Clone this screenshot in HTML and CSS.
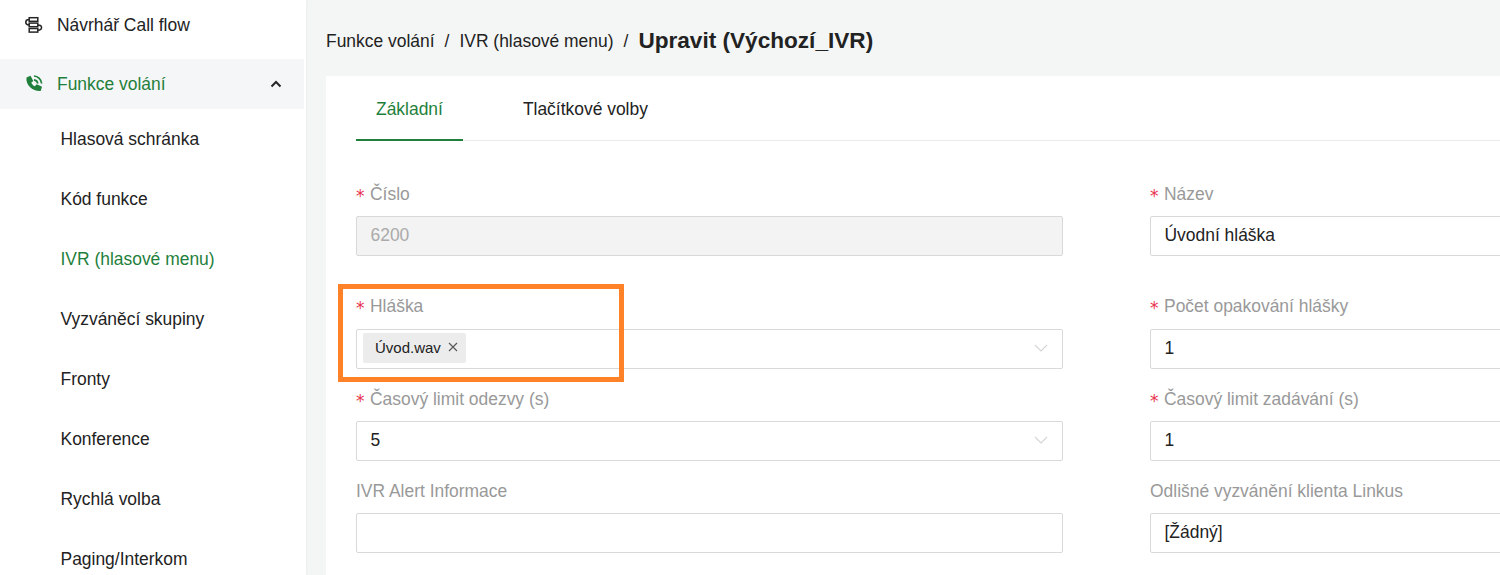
FILE: index.html
```html
<!DOCTYPE html>
<html lang="en">
<head>
  <meta charset="UTF-8">
  <title>Upravit IVR</title>
  <link rel="stylesheet" href="styles.css">
</head>
<body>
  <div class="page">
    <aside class="sidebar">
      <div class="nav-top">
        <svg class="nav-icon" viewBox="0 0 20 20" fill="none" stroke="#262626" stroke-width="1.5">
          <rect x="5.2" y="2.7" width="8.6" height="3.600"/>
          <rect x="5.2" y="8.100" width="8.6" height="3.600"/>
          <rect x="5.2" y="13.500" width="8.6" height="3.600"/>
          <path d="M5.2 4.500C.6 4.500 .6 9.900 5.200 9.900M13.800 9.900c5 0 5 5.400 0 5.400"/>
        </svg>
        <span>Návrhář Call flow</span>
      </div>
      <div class="nav-open">
        <svg class="nav-icon" viewBox="0 0 20 20" fill="#1f7f3b">
          <path d="M2.500 3.500 6.500 1.800 9.300 7 7.200 8.800c.8 1.600 1.900 2.800 3.600 3.500l2-2.100 5.200 2.600-1.300 4.300C8.500 17.500 1.500 11 2.500 3.500Z"/>
          <path d="M10 2c3.600.2 7.200 3.200 7.600 7.500M10 5.800c2 .2 3.500 1.700 3.800 3.700" fill="none" stroke="#1f7f3b" stroke-width="1.700"/>
        </svg>
        <span>Funkce volání</span>
        <svg class="nav-caret" viewBox="0 0 12 8" fill="none" stroke="#262626" stroke-width="2">
          <path d="M1.500 6.500 6 2l4.500 4.500"/>
        </svg>
      </div>
      <div class="nav-sub">Hlasová schránka</div>
      <div class="nav-sub">Kód funkce</div>
      <div class="nav-sub active">IVR (hlasové menu)</div>
      <div class="nav-sub">Vyzváněcí skupiny</div>
      <div class="nav-sub">Fronty</div>
      <div class="nav-sub">Konference</div>
      <div class="nav-sub">Rychlá volba</div>
      <div class="nav-sub">Paging/Interkom</div>
    </aside>

    <main class="content">
      <div class="crumbs">
        <span>Funkce volání</span><span class="sep">/</span>
        <span>IVR (hlasové menu)</span><span class="sep">/</span>
        <span class="crumb-title">Upravit (Výchozí_IVR)</span>
      </div>

      <div class="card">
        <div class="tabs">
          <div class="tab active">Základní</div>
          <div class="tab">Tlačítkové volby</div>
        </div>

        <div class="form">
          <div class="field">
            <div class="label"><span class="req">*</span>Číslo</div>
            <div class="input disabled">6200</div>
          </div>
          <div class="field">
            <div class="label"><span class="req">*</span>Název</div>
            <div class="input">Úvodní hláška</div>
          </div>

          <div class="field tall">
            <div class="label"><span class="req">*</span>Hláška</div>
            <div class="input select">
              <span class="tag">Úvod.wav
                <svg class="tag-x" viewBox="0 0 10 10" fill="none" stroke="#555" stroke-width="1.100"><path d="M1 1l8 8M9 1 1 9"/></svg>
              </span>
              <svg class="arrow" viewBox="0 0 14 8" fill="none" stroke="#d4d4d4" stroke-width="1.100"><path d="M1 1l6 6 6-6"/></svg>
            </div>
          </div>
          <div class="field tall">
            <div class="label"><span class="req">*</span>Počet opakování hlášky</div>
            <div class="input">1</div>
          </div>

          <div class="field">
            <div class="label"><span class="req">*</span>Časový limit odezvy (s)</div>
            <div class="input select">5
              <svg class="arrow" viewBox="0 0 14 8" fill="none" stroke="#d4d4d4" stroke-width="1.100"><path d="M1 1l6 6 6-6"/></svg>
            </div>
          </div>
          <div class="field">
            <div class="label"><span class="req">*</span>Časový limit zadávání (s)</div>
            <div class="input">1</div>
          </div>

          <div class="field">
            <div class="label">IVR Alert Informace</div>
            <div class="input"></div>
          </div>
          <div class="field">
            <div class="label">Odlišné vyzvánění klienta Linkus</div>
            <div class="input">[Žádný]</div>
          </div>
        </div>
      </div>
    </main>

    <div class="highlight"></div>
  </div>
</body>
</html>
```

FILE: styles.css
```css
html, body {
  margin: 0;
  height: 100%;
  overflow: hidden;
}
body {
  font-family: "Liberation Sans", Arial, sans-serif;
  font-size: 17.45px;
  color: #222;
  background-color: #f4f6f5;
}
.page {
  position: relative;
  display: flex;
  width: 1500px;
  height: 575px;
  overflow: hidden;
}

/* sidebar */
.sidebar {
  flex: none;
  width: 306px;
  height: 575px;
  background-color: white;
  box-shadow: 1px 0 2px rgba(0, 0, 0, 0.04);
}
.nav-top, .nav-open {
  display: flex;
  align-items: center;
  height: 50px;
  width: 304px;
  padding-left: 24px;
  box-sizing: border-box;
}
.nav-top {
  height: 50px;
  margin-bottom: 9px;
}
.nav-open {
  background-color: #f4f6f7;
  color: #1f7f3b;
}
.nav-icon {
  flex: none;
  width: 20px;
  height: 20px;
  margin-right: 13px;
}
.nav-caret {
  width: 12px;
  height: 8px;
  margin-left: auto;
  margin-right: 22px;
}
.nav-sub {
  display: flex;
  align-items: center;
  height: 60px;
  padding-left: 60.5px;
}
.nav-sub.active {
  color: #1f7f3b;
}

/* main */
.content {
  flex: none;
  width: 1194px;
  padding-left: 20px;
  box-sizing: border-box;
}
.crumbs {
  display: flex;
  align-items: center;
  height: 76px;
  padding-top: 6px;
  box-sizing: border-box;
}
.sep {
  margin: 0 10px;
}
.crumb-title {
  font-size: 22.6px;
  font-weight: bold;
}
.card {
  width: 1300px;
  height: 499px;
  padding: 0 30px;
  box-sizing: border-box;
  background-color: white;
}
.tabs {
  display: flex;
  height: 65px;
  box-sizing: border-box;
  border-bottom: 1px solid #ebebeb;
}
.tab {
  height: 65px;
  line-height: 66px;
  padding: 0 20px;
  box-sizing: border-box;
  margin-right: 40px;
}
.tab.active {
  color: #1f7f3b;
  border-bottom: 2px solid #1f7f3b;
}
.form {
  display: grid;
  grid-template-columns: 707px 707px;
  column-gap: 87px;
  padding-top: 43px;
}
.field {
  height: 92px;
}
.field.tall {
  height: 93px;
}
.form > .field:nth-child(-n+2) {
  height: 112px;
}
.label {
  height: 22px;
  line-height: 20px;
  margin-bottom: 10px;
  color: #999;
}
.tall .label {
  margin-bottom: 11px;
}
.req {
  color: #e8344e;
  margin-right: 5.5px;
  font-family: "DejaVu Sans", sans-serif;
  font-size: 17px;
  line-height: 1;
  vertical-align: -2px;
}
.input {
  display: flex;
  align-items: center;
  height: 40px;
  padding: 0 14px 2px 13.5px;
  box-sizing: border-box;
  border: 1px solid #d9d9d9;
  border-radius: 2px;
  background-color: white;
}
.input.disabled {
  background-color: #f3f3f3;
  color: #aaa;
}
.select {
  justify-content: space-between;
}
.tag {
  display: flex;
  align-items: center;
  align-self: flex-start;
  height: 30px;
  margin: 3px 0 0 -7.5px;
  padding: 0 8px 2px 12px;
  box-sizing: border-box;
  border-radius: 2px;
  background-color: #ececec;
  font-size: 15px;
}
.tag-x {
  width: 10px;
  height: 10px;
  margin-left: 7px;
}
.arrow {
  width: 14px;
  height: 8px;
}
.highlight {
  position: absolute;
  left: 338px;
  top: 284px;
  width: 276px;
  height: 88px;
  border: 5px solid #ff8229;
}
```
